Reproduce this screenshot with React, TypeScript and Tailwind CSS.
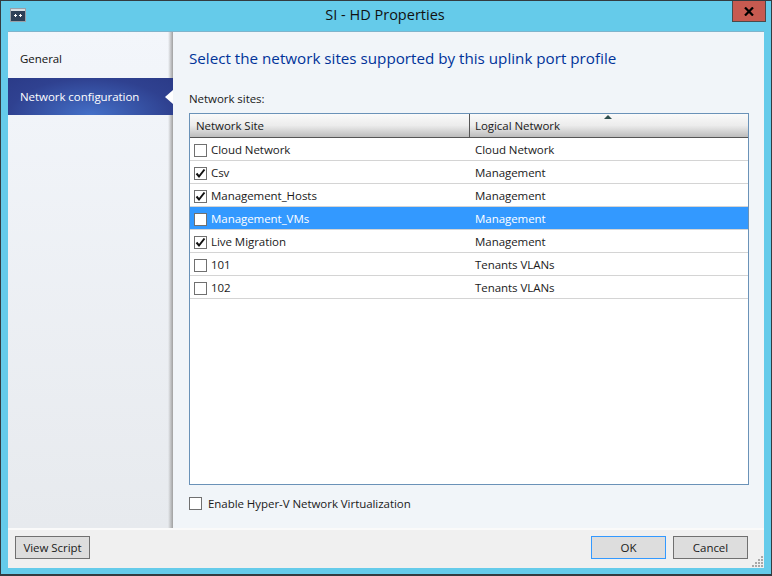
import React from 'react';

const rows = [
  { site: 'Cloud Network', net: 'Cloud Network', checked: false },
  { site: 'Csv', net: 'Management', checked: true },
  { site: 'Management_Hosts', net: 'Management', checked: true },
  { site: 'Management_VMs', net: 'Management', checked: false, selected: true },
  { site: 'Live Migration', net: 'Management', checked: true },
  { site: '101', net: 'Tenants VLANs', checked: false },
  { site: '102', net: 'Tenants VLANs', checked: false },
];

const Checkbox = ({ checked }: { checked?: boolean }) => (
  <div className="w-[13px] h-[13px] border border-[#707070] bg-white shrink-0 flex items-center justify-center">
    {checked && (
      <svg width="11" height="11" viewBox="0 0 11 11">
        <path d="M1.5 5.5 L4 8.5 L9.5 1.5" fill="none" stroke="#111" strokeWidth="2" />
      </svg>
    )}
  </div>
);

export default function App() {
  return (
    <div className="w-[772px] h-[576px] bg-[#65cbea] border border-[#333b40] border-b-[2px] flex flex-col overflow-hidden font-['Open_Sans',sans-serif] text-[11.5px] tracking-[-0.05px] text-[#1a1a1a]">
      {/* Title bar */}
      <div className="h-[30px] shrink-0 relative flex items-center justify-center">
        <svg className="absolute left-[9px] top-[7px]" width="17" height="14" viewBox="0 0 17 14">
          <rect x="0.5" y="0.5" width="15" height="13" fill="#2e4057" stroke="#9aa0a8" />
          <rect x="1" y="1" width="14" height="2" fill="#d8dde2" />
          <path d="M4 7.5h3M5.5 6v3M9 7.5h3M10.5 6v3" stroke="#fff" strokeWidth="1" />
        </svg>
        <span className="text-[14.5px] tracking-normal text-[#111] mb-[3px] mr-[2px]">SI - HD Properties</span>
        <div className="absolute right-[5px] top-[-1px] w-[34px] h-[22px] bg-[#c75a50] border border-[#4a4a4a] flex items-center justify-center">
          <svg width="10" height="9" viewBox="0 0 10 9">
            <path d="M1 0.5 L9 8.5 M9 0.5 L1 8.5" stroke="#000" strokeWidth="2.2" />
          </svg>
        </div>
      </div>

      {/* Client area */}
      <div className="mx-[7px] h-[537px] bg-[#f0f4f9] border-t border-[#7fb4cc] flex flex-col">
        <div className="flex-1 flex min-h-0">
          {/* Sidebar */}
          <div className="relative w-[165px] shrink-0 bg-gradient-to-b from-[#f3f6fb] to-[#e7eaee] pt-[11px]">
            <div className="absolute right-0 top-0 bottom-0 w-[5px] bg-gradient-to-r from-transparent to-[#a0a0a0]" />
            <div className="h-[31px] pl-[12px] flex items-center text-[#111]">General</div>
            <div className="relative mt-[4px] h-[37px] pl-[12px] flex items-center text-white bg-[radial-gradient(ellipse_at_50%_100%,#4470c8_0%,#2f4190_70%,#2b3b88_100%)]">
              Network configuration
              <div className="absolute right-0 top-[12px] w-0 h-0 border-y-[7px] border-y-transparent border-r-[8px] border-r-white" />
            </div>
          </div>

          {/* Main panel */}
          <div className="flex-1 min-w-0 bg-[#f1f5f9] pl-[16px] pr-[15px] flex flex-col">
            <div className="mt-[14px] h-[24px] flex items-center text-[15.2px] tracking-normal text-[#003399] whitespace-nowrap">
              Select the network sites supported by this uplink port profile
            </div>
            <div className="mt-[20px] h-[17px] flex items-center">Network sites:</div>
            <div className="mt-[6px] h-[372px] border border-[#6a92b8] bg-white flex flex-col">
              <div className="h-[24px] shrink-0 flex border-b border-[#555] bg-gradient-to-b from-[#fafafa] via-[#ececec] to-[#bdbdbd]">
                <div className="w-[280px] pl-[6px] pt-[1px] flex items-center border-r border-[#555]">Network Site</div>
                <div className="relative flex-1 pl-[5px] pt-[1px] flex items-center">
                  Logical Network
                  <div className="absolute left-[134px] top-[1px] w-0 h-0 border-x-[4px] border-x-transparent border-b-[4px] border-b-[#2f4f4f]" />
                </div>
              </div>
              {rows.map((r) => (
                <div
                  key={r.site}
                  className={`h-[23px] shrink-0 pt-[2px] flex items-center border-b border-[#d4d4d4] ${r.selected ? 'bg-[#3399ff] text-white' : ''}`}
                >
                  <div className="w-[281px] pl-[4px] flex items-center gap-[4px]">
                    <Checkbox checked={r.checked} />
                    <span>{r.site}</span>
                  </div>
                  <div className="pl-[4px]">{r.net}</div>
                </div>
              ))}
            </div>
            <div className="mt-[10px] flex items-center gap-[6px]">
              <Checkbox />
              <span>Enable Hyper-V Network Virtualization</span>
            </div>
          </div>
        </div>

        {/* Footer */}
        <div className="h-[40px] shrink-0 bg-[#f0f0f0] border-t-2 border-[#fafafa] relative flex items-start justify-between pt-[6px] pl-[7px] pr-[16px]">
          <button className="w-[75px] h-[23px] bg-[#dddddd] border border-[#707070]">View Script</button>
          <div className="flex gap-[7px]">
            <button className="w-[75px] h-[23px] bg-[#dddddd] border border-[#3399ff]">OK</button>
            <button className="w-[75px] h-[23px] bg-[#dddddd] border border-[#707070]">Cancel</button>
          </div>
          <svg className="absolute right-0 bottom-0" width="12" height="12" viewBox="0 0 12 12" fill="#a8a8a8">
            <rect x="9" y="0" width="2" height="2" />
            <rect x="6" y="3" width="2" height="2" /><rect x="9" y="3" width="2" height="2" />
            <rect x="3" y="6" width="2" height="2" /><rect x="6" y="6" width="2" height="2" /><rect x="9" y="6" width="2" height="2" />
            <rect x="0" y="9" width="2" height="2" /><rect x="3" y="9" width="2" height="2" /><rect x="6" y="9" width="2" height="2" /><rect x="9" y="9" width="2" height="2" />
          </svg>
        </div>
      </div>
    </div>
  );
}
